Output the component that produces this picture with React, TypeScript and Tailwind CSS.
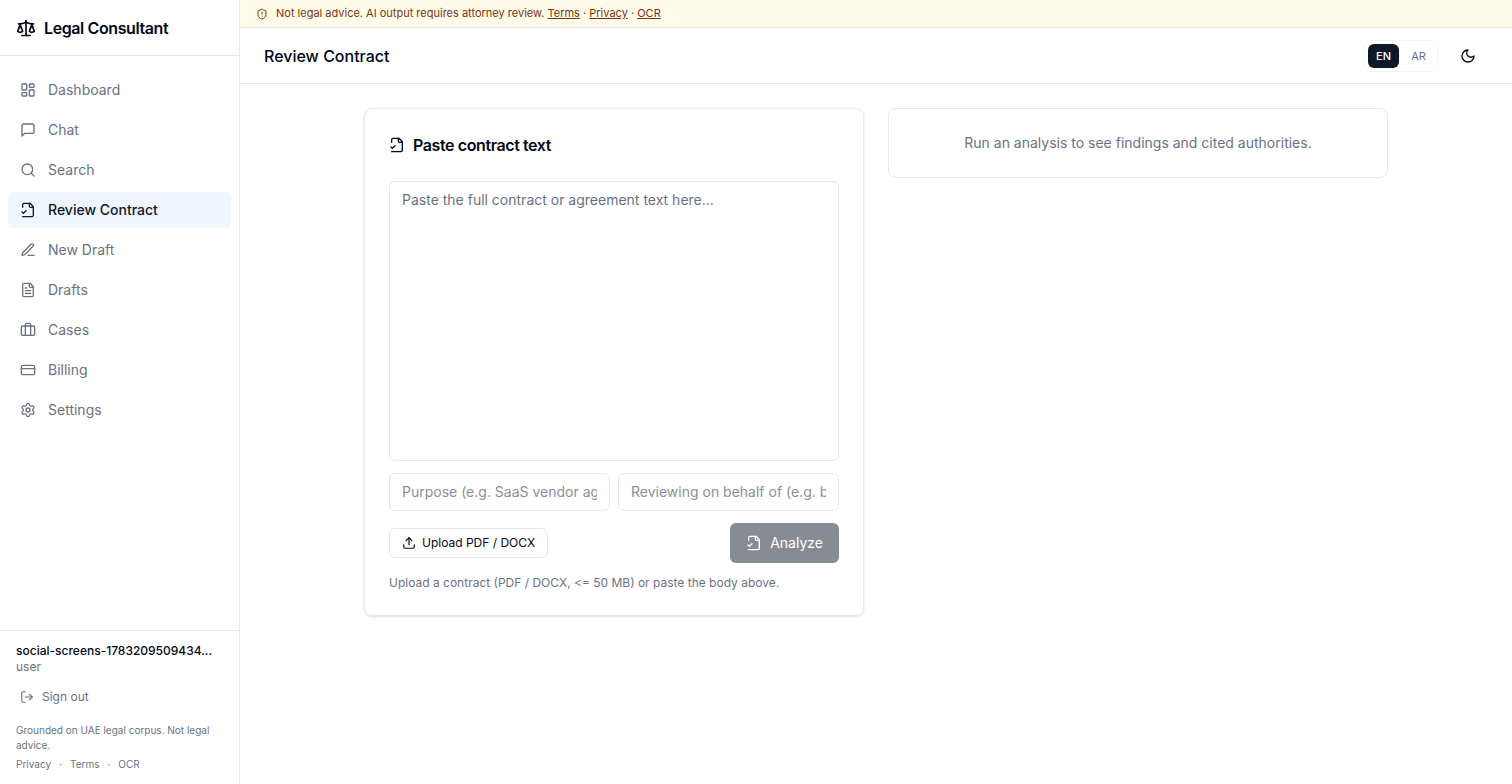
import type { ReactNode } from 'react'
import {
  CreditCard,
  LayoutDashboard,
  LogOut,
  Scale,
  Search,
  Settings,
  ShieldAlert,
  Upload,
} from 'lucide-react'

type IconProps = { className?: string }

function Icon({ className, children }: IconProps & { children: ReactNode }) {
  return (
    <svg
      viewBox="0 0 24 24"
      fill="none"
      stroke="currentColor"
      strokeWidth="2"
      strokeLinecap="round"
      strokeLinejoin="round"
      className={className}
      aria-hidden="true"
    >
      {children}
    </svg>
  )
}

const ContractIcon = ({ className }: IconProps) => (
  <Icon className={className}>
    <path d="M4 22h14a2 2 0 0 0 2-2V7l-5-5H6a2 2 0 0 0-2 2v4" />
    <path d="M14 2v4a2 2 0 0 0 2 2h4" />
    <path d="m3 15 2 2 4-4" />
  </Icon>
)

const CasesIcon = ({ className }: IconProps) => (
  <Icon className={className}>
    <rect width="20" height="14" x="2" y="6" rx="2" />
    <path d="M16 20V4a2 2 0 0 0-2-2h-4a2 2 0 0 0-2 2v16" />
  </Icon>
)

const ChatIcon = ({ className }: IconProps) => (
  <Icon className={className}>
    <path d="M21 15a2 2 0 0 1-2 2H7l-4 4V5a2 2 0 0 1 2-2h14a2 2 0 0 1 2 2z" />
  </Icon>
)

const DraftIcon = ({ className }: IconProps) => (
  <Icon className={className}>
    <path d="M12 20h9" />
    <path d="M16.5 3.5a2.12 2.12 0 0 1 3 3L7 19l-4 1 1-4Z" />
  </Icon>
)

const DocumentIcon = ({ className }: IconProps) => (
  <Icon className={className}>
    <path d="M15 2H6a2 2 0 0 0-2 2v16a2 2 0 0 0 2 2h12a2 2 0 0 0 2-2V7Z" />
    <path d="M14 2v4a2 2 0 0 0 2 2h4" />
    <path d="M10 9H8" />
    <path d="M16 13H8" />
    <path d="M16 17H8" />
  </Icon>
)

const MoonIcon = ({ className }: IconProps) => (
  <Icon className={className}>
    <path d="M12 3a6 6 0 0 0 9 9 9 9 0 1 1-9-9Z" />
  </Icon>
)

const navItems = [
  { label: 'Dashboard', icon: LayoutDashboard },
  { label: 'Chat', icon: ChatIcon },
  { label: 'Search', icon: Search },
  { label: 'Review Contract', icon: ContractIcon, active: true },
  { label: 'New Draft', icon: DraftIcon },
  { label: 'Drafts', icon: DocumentIcon },
  { label: 'Cases', icon: CasesIcon },
  { label: 'Billing', icon: CreditCard },
  { label: 'Settings', icon: Settings },
]

function Sidebar() {
  return (
    <aside className="flex w-60 shrink-0 flex-col border-r border-gray-200">
      <div className="flex h-14 items-center gap-2 border-b border-gray-200 px-4">
        <Scale className="size-5" />
        <span className="font-semibold tracking-tight">Legal Consultant</span>
      </div>

      <nav className="flex flex-1 flex-col gap-1 px-2 py-4">
        {navItems.map(({ label, icon: NavIcon, active }) => (
          <a
            key={label}
            href="#"
            aria-current={active ? 'page' : undefined}
            className={`flex items-center gap-3 rounded-md px-3 py-2 text-sm ${
              active ? 'bg-[#f1f5fd] font-medium text-[#0f172a]' : 'text-gray-500'
            }`}
          >
            <NavIcon className="size-4" />
            {label}
          </a>
        ))}
      </nav>

      <div className="border-t border-gray-200 px-4 py-3">
        <p className="text-xs font-medium">social-screens-1783209509434...</p>
        <p className="text-xs text-gray-500">user</p>
        <button type="button" className="mt-2 flex h-7 items-center gap-2 px-1 text-xs text-gray-500">
          <LogOut className="size-3.5" />
          Sign out
        </button>
        <p className="mt-3 text-[10px] leading-[15px] text-gray-500">
          Grounded on UAE legal corpus. Not legal advice.
        </p>
        <div className="mt-1 flex gap-2 text-[10px] leading-[15px] text-gray-500">
          <a href="#">Privacy</a>
          <span>·</span>
          <a href="#">Terms</a>
          <span>·</span>
          <a href="#">OCR</a>
        </div>
      </div>
    </aside>
  )
}

function Disclaimer() {
  return (
    <div className="flex items-center gap-2 border-b border-gray-200 bg-[#fffbeb] px-4 py-1.5 text-[11px] leading-[15px] text-[#78350f]">
      <ShieldAlert className="size-3" />
      <p>
        Not legal advice. AI output requires attorney review.{' '}
        <a href="#" className="underline">Terms</a> · <a href="#" className="underline">Privacy</a> ·{' '}
        <a href="#" className="underline">OCR</a>
      </p>
    </div>
  )
}

function Header() {
  return (
    <header className="flex h-14 items-center justify-between border-b border-gray-200 px-6">
      <h1 className="font-medium">Review Contract</h1>
      <div className="flex items-center gap-2.5">
        <div className="flex gap-1 rounded-md border border-gray-100 p-[3px] text-[11px] leading-4">
          <button type="button" className="w-[31px] rounded-md bg-[#0f172a] py-1 font-medium text-white">
            EN
          </button>
          <button type="button" className="w-[31px] rounded-md py-1 text-gray-500">
            AR
          </button>
        </div>
        <button type="button" aria-label="Toggle theme" className="flex size-10 items-center justify-center">
          <MoonIcon className="size-4" />
        </button>
      </div>
    </header>
  )
}

const inputClass = 'w-full min-w-0 rounded-md border border-gray-200 px-3 py-2 text-sm placeholder:text-[#8e8e93]'

function ContractForm() {
  return (
    <section className="rounded-lg border border-gray-200 p-6 shadow-sm">
      <h2 className="flex items-center gap-2 font-semibold tracking-tight">
        <ContractIcon className="size-4" />
        Paste contract text
      </h2>
      <form className="mt-6 flex flex-col gap-3">
        <textarea
          aria-label="Contract text"
          placeholder="Paste the full contract or agreement text here..."
          className="block h-[280px] w-full resize-none rounded-md border border-gray-200 px-3 py-2 text-sm placeholder:text-gray-500"
        />
        <div className="grid grid-cols-2 gap-2">
          <input
            type="text"
            aria-label="Purpose"
            placeholder="Purpose (e.g. SaaS vendor agreement)"
            className={inputClass}
          />
          <input
            type="text"
            aria-label="Reviewing on behalf of"
            placeholder="Reviewing on behalf of (e.g. buyer)"
            className={inputClass}
          />
        </div>
        <div className="flex items-center justify-between">
          <button
            type="button"
            className="flex items-center gap-1.5 rounded-md border border-gray-200 px-3 py-1.5 text-xs"
          >
            <Upload className="size-3.5" />
            Upload PDF / DOCX
          </button>
          <button
            type="submit"
            disabled
            className="flex h-10 items-center gap-2 rounded-md bg-[#878b94] px-4 text-sm text-white"
          >
            <ContractIcon className="size-4" />
            Analyze
          </button>
        </div>
        <p className="text-xs text-gray-500">
          Upload a contract (PDF / DOCX, &lt;= 50 MB) or paste the body above.
        </p>
      </form>
    </section>
  )
}

export default function App() {
  return (
    <div className="flex min-h-screen bg-white font-[Inter,sans-serif] text-[#020817]">
      <Sidebar />
      <div className="flex min-w-0 flex-1 flex-col">
        <Disclaimer />
        <Header />
        <main className="p-6">
          <div className="mx-auto grid max-w-5xl grid-cols-2 items-start gap-6">
            <ContractForm />
            <section className="rounded-lg border border-gray-200 p-6 text-center text-sm text-gray-500">
              Run an analysis to see findings and cited authorities.
            </section>
          </div>
        </main>
      </div>
    </div>
  )
}
